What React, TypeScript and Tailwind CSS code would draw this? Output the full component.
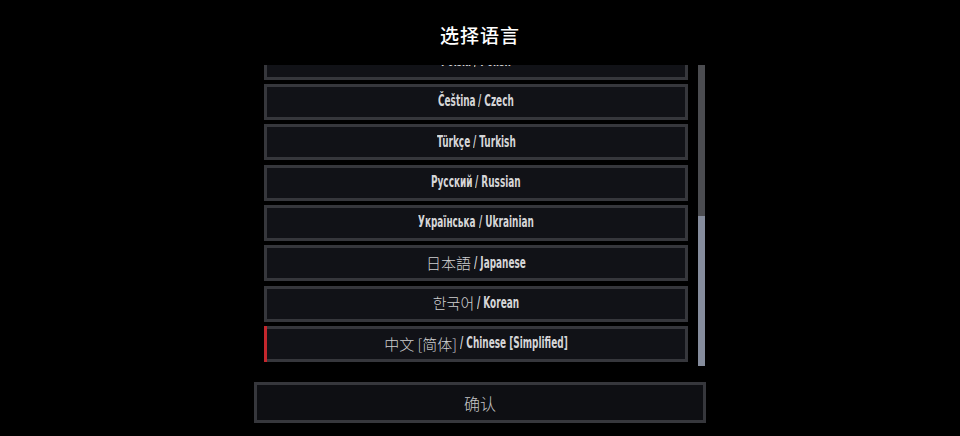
// 언어 선택 화면
import { useLayoutEffect, useRef, useState, type ReactNode } from "react";

const languages = [
  { native: "Polski", english: "Polish", cjk: false },
  { native: "Čeština", english: "Czech", cjk: false },
  { native: "Türkçe", english: "Turkish", cjk: false },
  { native: "Русский", english: "Russian", cjk: false },
  { native: "Українська", english: "Ukrainian", cjk: false },
  { native: "日本語", english: "Japanese", cjk: true },
  { native: "한국어", english: "Korean", cjk: true },
  { native: "中文 [简体]", english: "Chinese [Simplified]", cjk: true, selected: true },
];

const SCALE = 0.64;

// 좁은 글꼴이 없어서 가로로 눌러서 표시
function Condensed({ children }: { children: ReactNode }) {
  const ref = useRef<HTMLSpanElement>(null);
  const [shrink, setShrink] = useState(0);
  useLayoutEffect(() => {
    if (ref.current) setShrink(ref.current.offsetWidth * (1 - SCALE));
  }, []);
  return (
    <span
      ref={ref}
      className="inline-block whitespace-pre origin-left scale-x-[0.64] font-['DejaVu_Sans_Condensed','DejaVu_Sans',sans-serif] font-bold text-[15.5px]"
      style={{ marginRight: -shrink }}
    >
      {children}
    </span>
  );
}

export default function App() {
  return (
    <div className="w-[960px] h-[436px] bg-black flex flex-col items-center overflow-hidden">
      {/* 타이틀 */}
      <div className="h-[65px] flex items-center justify-center">
        <h1 className="text-[19px] text-white font-medium tracking-[1px] font-['Noto_Sans_CJK_SC',sans-serif] mt-[5px]">
          选择语言
        </h1>
      </div>

      {/* 목록 + 스크롤바 */}
      <div className="w-[452px] h-[301px] flex pl-[10px] pr-[1px] gap-[10px]">
        <div className="w-[424px] h-full overflow-hidden">
          <div className="flex flex-col gap-[4.33px] mt-[-21.3px]">
            {languages.map((lang) => (
              <div
                key={lang.english}
                className="relative h-[36px] border-[3px] border-[#36373c] bg-[#111217] flex items-center justify-center text-[#d6d6d8]"
              >
                {lang.selected && (
                  <div className="absolute left-[-3px] top-[-3px] bottom-[-3px] w-[3px] bg-[#c4272d]" />
                )}
                {lang.cjk ? (
                  <span className="font-['Noto_Sans_CJK_SC','Noto_Sans_CJK_KR',sans-serif] font-light text-[15px] text-[#cfcfd1] mr-[3px]">
                    {lang.native}
                  </span>
                ) : (
                  <Condensed>{lang.native} </Condensed>
                )}
                <Condensed>/ {lang.english}</Condensed>
              </div>
            ))}
          </div>
        </div>
        <div className="w-[7px] h-full flex flex-col">
          <div className="flex-1 bg-[#4b4c50]" />
          <div className="h-[150px] bg-[#858c9c]" />
        </div>
      </div>

      {/* 확인 버튼 */}
      <button className="mt-[16px] w-[452px] h-[41px] border-[3px] border-[#36373c] bg-[#0e0f13] text-[16px] font-light text-[#c4c4c7] font-['Noto_Sans_CJK_SC',sans-serif]">
        确认
      </button>
    </div>
  );
}
